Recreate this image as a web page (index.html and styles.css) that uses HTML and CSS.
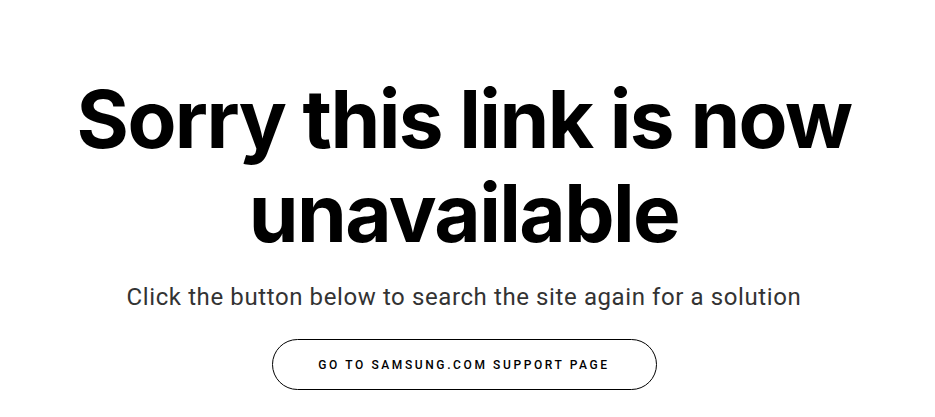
FILE: index.html
```html
<!DOCTYPE html>
<html lang="en">
<head>
    <meta charset="UTF-8">
    <meta name="viewport" content="width=device-width, initial-scale=1.0">
    <title>Link unavailable</title>
    <link rel="stylesheet" href="styles.css">
</head>
<body>
    <div class="error-page">
        <h1 class="headline">Sorry this link is now<br>unavailable</h1>
        <p class="subtext">Click the button below to search the site again for a solution</p>
        <a class="support-btn" href="#">GO TO SAMSUNG.COM SUPPORT PAGE</a>
    </div>
</body>
</html>
```

FILE: styles.css
```css
body {
    margin: 0;
    background-color: #fff;
    font-family: 'Roboto', 'Liberation Sans', sans-serif;
    color: #000;
}
.error-page {
    display: flex;
    flex-direction: column;
    align-items: center;
    text-align: center;
    padding: 72px 7px 0 0;
}
.headline {
    margin: 0;
    font-family: 'Inter', 'Liberation Sans', sans-serif;
    font-weight: 700;
    font-size: 80px;
    line-height: 94px;
    letter-spacing: -1.6px;
}
.subtext {
    margin: 22px 0 0;
    font-size: 24px;
    line-height: 30px;
    letter-spacing: 0.6px;
    color: #333;
}
.support-btn {
    margin-top: 27px;
    box-sizing: border-box;
    width: 385px;
    height: 51px;
    display: flex;
    align-items: center;
    justify-content: center;
    border: 1px solid #000;
    border-radius: 26px;
    color: #000;
    text-decoration: none;
    font-size: 12px;
    font-weight: 500;
    letter-spacing: 2.6px;
}
```
